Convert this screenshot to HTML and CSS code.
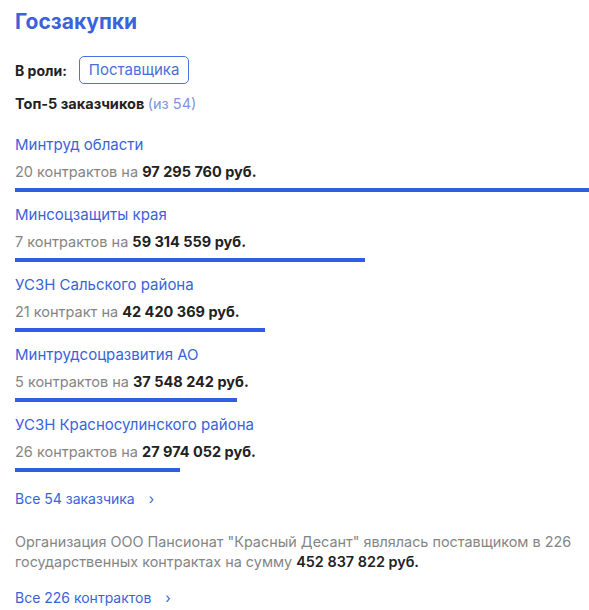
FILE: index.html
```html
<!DOCTYPE html>
<html lang="ru">

<head>
    <meta charset="UTF-8">
    <meta name="viewport" content="width=device-width, initial-scale=1.0">
    <title>Госзакупки</title>
    <link rel="stylesheet" href="styles.css">
</head>

<body>
    <div id="caixa">
        <!--ЗАГОЛОВОК-->
        <h2>Госзакупки</h2>

        <div class="rol">
            <span class="rol-label">В роли:</span>
            <span class="rol-btn">Поставщика</span>
        </div>

        <div class="top">Топ-5 заказчиков <span class="top-count">(из 54)</span></div>

        <!--СПИСОК ЗАКАЗЧИКОВ-->
        <div class="lista">
            <div class="item">
                <a class="nome" href="#">Минтруд области</a>
                <div class="sub">20 контрактов на <b>97 295 760 руб.</b></div>
                <div class="barra" style="width: 100%"></div>
            </div>
            <div class="item">
                <a class="nome" href="#">Минсоцзащиты края</a>
                <div class="sub">7 контрактов на <b>59 314 559 руб.</b></div>
                <div class="barra" style="width: 61%"></div>
            </div>
            <div class="item">
                <a class="nome" href="#">УСЗН Сальского района</a>
                <div class="sub">21 контракт на <b>42 420 369 руб.</b></div>
                <div class="barra" style="width: 43.6%"></div>
            </div>
            <div class="item">
                <a class="nome" href="#">Минтрудсоцразвития АО</a>
                <div class="sub">5 контрактов на <b>37 548 242 руб.</b></div>
                <div class="barra" style="width: 38.6%"></div>
            </div>
            <div class="item">
                <a class="nome" href="#">УСЗН Красносулинского района</a>
                <div class="sub">26 контрактов на <b>27 974 052 руб.</b></div>
                <div class="barra" style="width: 28.7%"></div>
            </div>
        </div>

        <a class="mais" href="#">Все 54 заказчика <span class="seta">›</span></a>

        <p class="texto">Организация ООО Пансионат "Красный Десант" являлась поставщиком в 226 государственных контрактах на сумму <b>452 837 822 руб.</b></p>

        <a class="mais" href="#">Все 226 контрактов <span class="seta">›</span></a>
    </div>
</body>

</html>
```

FILE: styles.css
```css
* {
    margin: 0;
    padding: 0;
    box-sizing: border-box;
}

body {
    font-family: "Inter", "Noto Sans", sans-serif;
    background: #fff;
    color: #222;
}

#caixa {
    display: flex;
    flex-direction: column;
    align-items: flex-start;
    padding: 9px 0 0 15px;
}

h2 {
    color: #3a63d8;
    font-size: 21px;
    font-weight: 700;
    line-height: 26px;
    margin-bottom: 21px;
}

.rol {
    display: flex;
    align-items: center;
    gap: 12px;
    margin-bottom: 10px;
}

.rol-label {
    font-size: 14px;
    font-weight: 700;
    color: #222;
}

.rol-btn {
    border: 1.5px solid #4a72dc;
    border-radius: 5px;
    color: #4a6fd8;
    font-size: 15px;
    padding: 0 9px;
    height: 28px;
    line-height: 25px;
}

.top {
    font-size: 14.5px;
    font-weight: 700;
    line-height: 20px;
    margin-bottom: 21px;
}

.top-count {
    font-weight: 400;
    color: #7d95e0;
}

.lista {
    display: flex;
    flex-direction: column;
    gap: 13px;
    width: 100%;
}

.item {
    display: flex;
    flex-direction: column;
}

.nome {
    color: #3a63d8;
    text-decoration: none;
    font-size: 15px;
    line-height: 20px;
    margin-bottom: 7px;
}

.sub {
    font-size: 14.5px;
    color: #858585;
    line-height: 20px;
    margin-bottom: 6px;
}

.sub b {
    color: #222;
}

.barra {
    height: 4px;
    background: #2f5fe0;
}

.mais {
    color: #3a63d8;
    text-decoration: none;
    font-size: 14px;
    margin-top: 17px;
    line-height: 20px;
}

.seta {
    margin-left: 10px;
}

.texto {
    font-size: 14.4px;
    color: #858585;
    line-height: 20px;
    margin-top: 23px;
}

.texto b {
    color: #222;
    font-weight: 600;
}

.texto + .mais {
    margin-top: 16px;
}
```
